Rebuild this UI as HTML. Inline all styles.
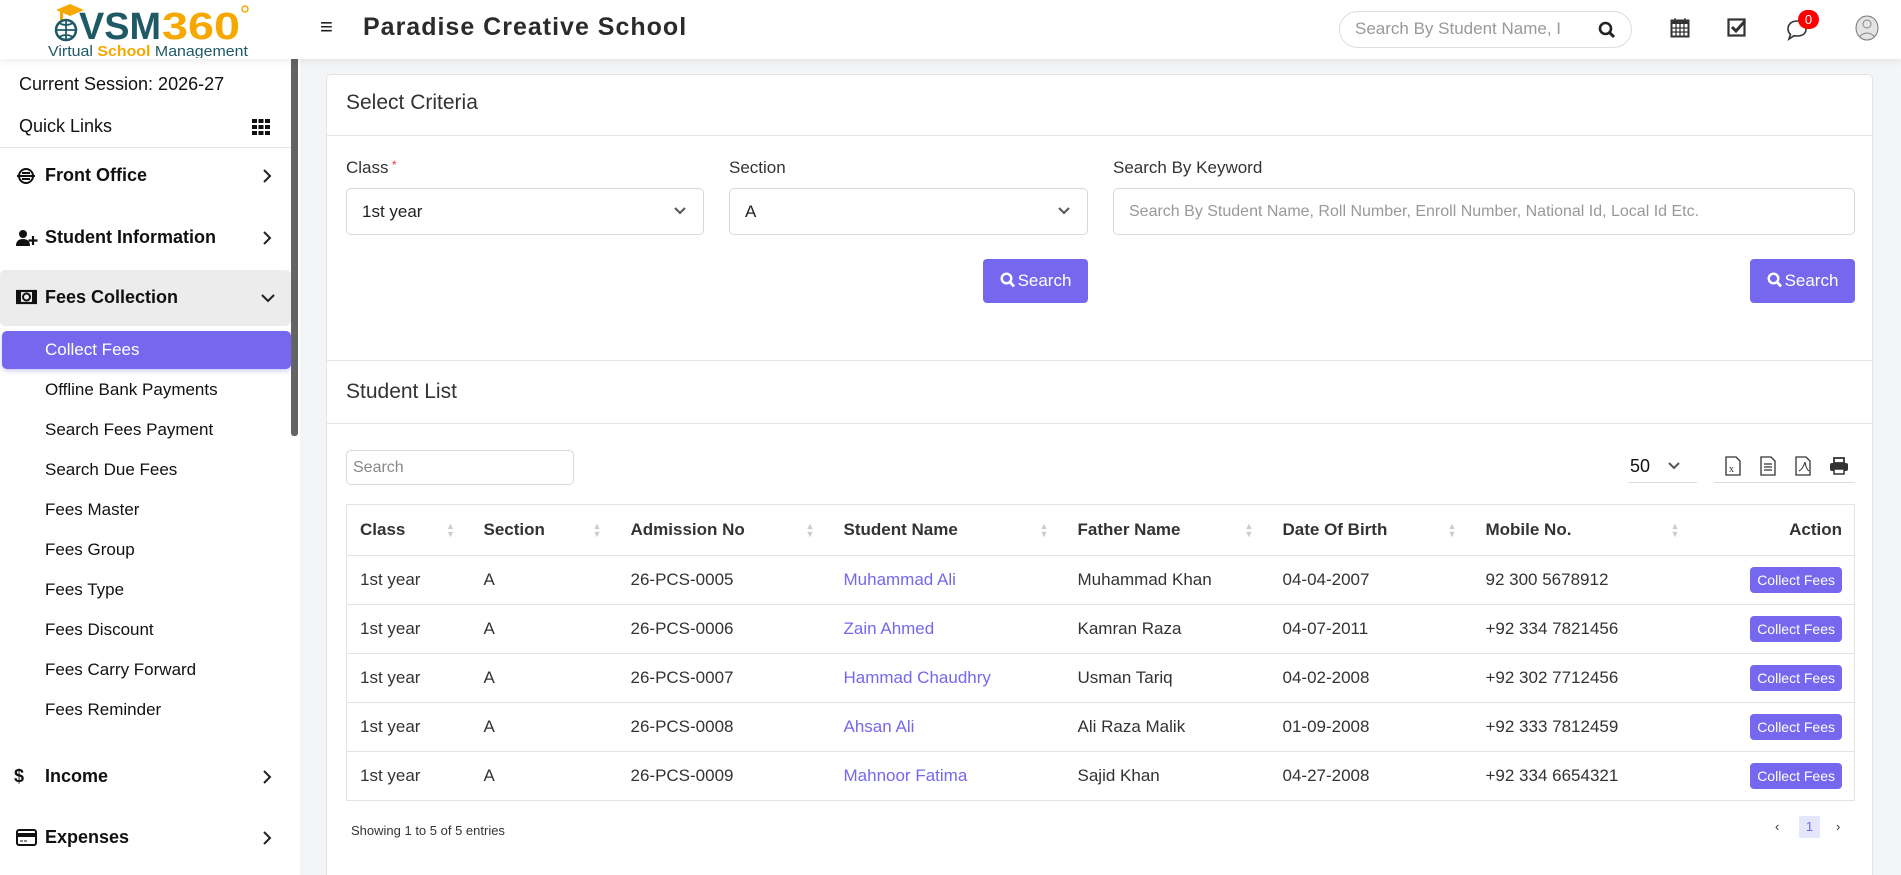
<!DOCTYPE html>
<html><head><meta charset="utf-8">
<style>
*{box-sizing:border-box;margin:0;padding:0}
html{width:1901px;height:875px;overflow:hidden}
body{width:1901px;height:875px;overflow:hidden;background:#f4f5f7;font-family:"Liberation Sans",sans-serif;color:#333;position:relative}
.a{position:absolute}
#hdr{left:0;top:0;width:1901px;height:59px;background:#fff;box-shadow:0 2px 8px rgba(0,0,0,.08);z-index:5}
#side{left:0;top:59px;width:300px;height:816px;background:#fff;z-index:3}
.mi{position:absolute;left:16px;font-weight:bold;font-size:18px;color:#111}
.mi svg{position:absolute;left:0;top:2px}
.mi span{position:absolute;left:29px;white-space:nowrap}
.chev{position:absolute;left:261px}
.sub{position:absolute;left:45px;font-size:17px;color:#111;white-space:nowrap}
#card{left:326px;top:74px;width:1547px;height:801px;background:#fff;border:1px solid #e3e3e3;border-bottom:none;border-radius:5px 5px 0 0}
.lbl{position:absolute;font-size:17px;color:#333}
.sel{position:absolute;height:47px;border:1px solid #d6d9e0;border-radius:5px;background:#fff;font-size:17px;color:#222;padding:13px 15px}
.btn{position:absolute;background:#7567ee;color:#fff;border-radius:4px;font-size:17px;padding:12px 0;text-align:center}
.btn svg{vertical-align:-2px;margin-right:3px}
table{position:absolute;left:346px;top:504px;width:1509px;border-collapse:collapse;font-size:17px}
td,th{height:49px;border-bottom:1px solid #e3e3e3;text-align:left;padding:0 0 0 13px;white-space:nowrap}
th{height:51px;font-weight:bold;color:#333;position:relative}
tbody td{color:#333}
.srt{position:absolute;top:17px;font-size:9px;color:#ccc;line-height:8px}
.lnk{color:#7567ee}
.cf{display:inline-block;background:#7567ee;color:#fff;font-size:14px;padding:5px 7px;border-radius:4px}
</style></head><body>
<div id="hdr" class="a">
  <svg class="a" style="left:44px;top:2px" width="210" height="56" viewBox="0 0 210 56">
    <path d="M12 8 L26 2 L40 8 L26 14 Z" fill="#f7a800"/><rect x="16" y="8" width="3" height="10" fill="#f7a800"/>
    <circle cx="22" cy="28" r="10" fill="none" stroke="#1f5966" stroke-width="2.5"/><path d="M12 28h20M22 18v20M15 21q7 4 14 0M15 35q7-4 14 0" stroke="#1f5966" stroke-width="1.8" fill="none"/>
    <text x="35" y="37" font-family="Liberation Sans" font-weight="bold" font-size="38" fill="#1f5966" textLength="82" lengthAdjust="spacingAndGlyphs">VSM</text>
    <text x="118" y="37" font-family="Liberation Sans" font-weight="bold" font-size="38" fill="#f7a800" textLength="78" lengthAdjust="spacingAndGlyphs">360</text>
    <circle cx="201" cy="7" r="3" fill="none" stroke="#f7a800" stroke-width="1.5"/>
    <text x="4" y="54" font-family="Liberation Sans" font-size="15" fill="#1f5966" textLength="200" lengthAdjust="spacingAndGlyphs">Virtual <tspan fill="#f7a800" font-weight="bold">School</tspan> Management</text>
  </svg>
  <div class="a" style="left:320px;top:14px;font-size:22px;font-weight:bold;color:#222">≡</div>
  <div class="a" style="left:363px;top:13px;font-size:25px;font-weight:bold;color:#2b2b2b;letter-spacing:1px">Paradise Creative School</div>
  <div class="a" style="left:1339px;top:11px;width:293px;height:37px;border:1px solid #ddd;border-radius:19px"></div>
  <div class="a" style="left:1355px;top:19px;font-size:17px;color:#999">Search By Student Name, I</div>
  <svg class="a" style="left:1598px;top:21px" width="18" height="18" viewBox="0 0 18 18"><circle cx="7.5" cy="7.5" r="5.5" fill="none" stroke="#222" stroke-width="2.6"/><path d="M11.5 11.5l4.5 4.5" stroke="#222" stroke-width="3"/></svg>
  <svg class="a" style="left:1670px;top:17px" width="20" height="21" viewBox="0 0 20 21"><rect x="1.5" y="3.5" width="17" height="16" fill="none" stroke="#333" stroke-width="2"/><rect x="1" y="3" width="18" height="4" fill="#333"/><path d="M5 1v4M15 1v4M1.5 11h17M1.5 15h17M6 7v12M10 7v12M14 7v12" stroke="#333" stroke-width="1.3"/></svg>
  <svg class="a" style="left:1727px;top:17px" width="22" height="21" viewBox="0 0 22 21"><rect x="1.5" y="2.5" width="16" height="16" fill="none" stroke="#333" stroke-width="2.2"/><path d="M5 10l4 4 9-10" fill="none" stroke="#333" stroke-width="3"/></svg>
  <svg class="a" style="left:1785px;top:18px" width="24" height="24" viewBox="0 0 24 24"><path d="M3 11c0-5 4-8 9-8s9 3 9 8-4 7-9 7c-1 0-2 0-3-.3L4 21l1.5-4.5C4 15 3 13 3 11z" fill="none" stroke="#333" stroke-width="1.6"/></svg>
  <div class="a" style="left:1798px;top:10px;width:21px;height:19px;background:#f00;border-radius:10px;color:#fff;font-size:13px;text-align:center;line-height:19px">0</div>
  <svg class="a" style="left:1855px;top:15px" width="24" height="26" viewBox="0 0 24 26"><ellipse cx="12" cy="13" rx="11" ry="12" fill="#e4e4e4" stroke="#777" stroke-width="1"/><circle cx="12" cy="9" r="4" fill="none" stroke="#888"/><path d="M4 22q8-8 16 0" fill="none" stroke="#888"/></svg>
</div>

<div id="side" class="a">
  <div class="a" style="left:291px;top:-17px;width:7px;height:394px;background:#646464;border-radius:3px"></div>
  <div class="a" style="left:19px;top:15px;font-size:18px;color:#111">Current Session: 2026-27</div>
  <div class="a" style="left:19px;top:57px;font-size:18px;color:#111">Quick Links</div>
  <svg class="a" style="left:252px;top:60px" width="18" height="16" viewBox="0 0 18 16"><g fill="#111"><rect x="0" y="0" width="5" height="4"/><rect x="6.5" y="0" width="5" height="4"/><rect x="13" y="0" width="5" height="4"/><rect x="0" y="6" width="5" height="4"/><rect x="6.5" y="6" width="5" height="4"/><rect x="13" y="6" width="5" height="4"/><rect x="0" y="12" width="5" height="4"/><rect x="6.5" y="12" width="5" height="4"/><rect x="13" y="12" width="5" height="4"/></g></svg>
  <div class="a" style="left:0;top:88px;width:291px;height:1px;background:#e5e5e5"></div>

  <div class="mi" style="top:106px"><svg width="20" height="18" viewBox="0 0 20 18"><circle cx="10" cy="9" r="7" fill="none" stroke="#111" stroke-width="2"/><path d="M1 9h18M6 6h8M6 12h8" stroke="#111" stroke-width="2"/></svg><span>Front Office</span></div>
  <svg class="chev" style="top:108px" width="12" height="18" viewBox="0 0 12 18"><path d="M3 3l6 6-6 6" fill="none" stroke="#222" stroke-width="2"/></svg>
  <div class="mi" style="top:168px"><svg width="22" height="18" viewBox="0 0 22 18"><circle cx="7" cy="5" r="4" fill="#111"/><path d="M0 17q0-7 7-7t7 7z" fill="#111"/><path d="M17 7v9M12.5 11.5h9" stroke="#111" stroke-width="2.2"/></svg><span>Student Information</span></div>
  <svg class="chev" style="top:170px" width="12" height="18" viewBox="0 0 12 18"><path d="M3 3l6 6-6 6" fill="none" stroke="#222" stroke-width="2"/></svg>
  <div class="a" style="left:0;top:211px;width:291px;height:56px;background:#ececec;border-radius:5px"></div>
  <div class="mi" style="top:228px"><svg width="21" height="16" viewBox="0 0 21 16"><rect x="1" y="2" width="19" height="12" fill="none" stroke="#111" stroke-width="2.2"/><circle cx="10.5" cy="8" r="3.5" fill="none" stroke="#111" stroke-width="2"/><rect x="1" y="2" width="4" height="12" fill="#111"/><rect x="16" y="2" width="4" height="12" fill="#111"/></svg><span>Fees Collection</span></div>
  <svg class="a" style="left:260px;top:233px" width="16" height="12" viewBox="0 0 16 12"><path d="M2 3l6 6 6-6" fill="none" stroke="#222" stroke-width="2"/></svg>
  <div class="a" style="left:2px;top:272px;width:289px;height:38px;background:#7567ee;border-radius:5px;box-shadow:0 2px 5px rgba(117,103,238,.35)"></div>
  <div class="sub" style="top:281px;color:#fff">Collect Fees</div>
  <div class="sub" style="top:321px">Offline Bank Payments</div>
  <div class="sub" style="top:361px">Search Fees Payment</div>
  <div class="sub" style="top:401px">Search Due Fees</div>
  <div class="sub" style="top:441px">Fees Master</div>
  <div class="sub" style="top:481px">Fees Group</div>
  <div class="sub" style="top:521px">Fees Type</div>
  <div class="sub" style="top:561px">Fees Discount</div>
  <div class="sub" style="top:601px">Fees Carry Forward</div>
  <div class="sub" style="top:641px">Fees Reminder</div>
  <div class="mi" style="top:707px"><span style="left:-2px">$</span><span>Income</span></div>
  <svg class="chev" style="top:709px" width="12" height="18" viewBox="0 0 12 18"><path d="M3 3l6 6-6 6" fill="none" stroke="#222" stroke-width="2"/></svg>
  <div class="mi" style="top:768px"><svg width="21" height="17" viewBox="0 0 21 17"><rect x="1" y="1" width="19" height="15" rx="2" fill="none" stroke="#111" stroke-width="2"/><rect x="1" y="4" width="19" height="4" fill="#111"/><path d="M4 12h3M8 12h3" stroke="#111"/></svg><span>Expenses</span></div>
  <svg class="chev" style="top:770px" width="12" height="18" viewBox="0 0 12 18"><path d="M3 3l6 6-6 6" fill="none" stroke="#222" stroke-width="2"/></svg>
</div>

<div id="card" class="a"></div>
<div class="a" style="left:346px;top:91px;font-size:21px;color:#333">Select Criteria</div>
<div class="a" style="left:327px;top:135px;width:1545px;height:1px;background:#e5e5e5"></div>
<div class="lbl" style="left:346px;top:158px">Class<span style="color:#e33;font-size:12px;vertical-align:top"> *</span></div>
<div class="lbl" style="left:729px;top:158px">Section</div>
<div class="lbl" style="left:1113px;top:158px">Search By Keyword</div>
<div class="sel" style="left:346px;top:188px;width:358px">1st year</div>
<div class="sel" style="left:729px;top:188px;width:359px">A</div>
<svg class="a" style="left:673px;top:206px" width="14" height="10" viewBox="0 0 14 10"><path d="M2 2l5 5 5-5" fill="none" stroke="#555" stroke-width="2"/></svg>
<svg class="a" style="left:1057px;top:206px" width="14" height="10" viewBox="0 0 14 10"><path d="M2 2l5 5 5-5" fill="none" stroke="#555" stroke-width="2"/></svg>
<div class="sel" style="left:1113px;top:188px;width:742px;color:#999;font-size:16px;padding-top:14px">Search By Student Name, Roll Number, Enroll Number, National Id, Local Id Etc.</div>
<div class="btn" style="left:983px;top:259px;width:105px;height:44px"><svg width="15" height="16" viewBox="0 0 15 16"><circle cx="6.5" cy="6.5" r="4.8" fill="none" stroke="#fff" stroke-width="2.4"/><path d="M10 10l4 4.5" stroke="#fff" stroke-width="2.8"/></svg>Search</div>
<div class="btn" style="left:1750px;top:259px;width:105px;height:44px"><svg width="15" height="16" viewBox="0 0 15 16"><circle cx="6.5" cy="6.5" r="4.8" fill="none" stroke="#fff" stroke-width="2.4"/><path d="M10 10l4 4.5" stroke="#fff" stroke-width="2.8"/></svg>Search</div>
<div class="a" style="left:327px;top:360px;width:1545px;height:1px;background:#e5e5e5"></div>
<div class="a" style="left:346px;top:380px;font-size:21px;color:#333">Student List</div>
<div class="a" style="left:327px;top:423px;width:1545px;height:1px;background:#e5e5e5"></div>
<div class="a" style="left:346px;top:450px;width:228px;height:35px;border:1px solid #d6d9e0;border-radius:5px;padding:8px 6px;font-size:16px;color:#888">Search</div>
<div class="a" style="left:1630px;top:456px;font-size:18px;color:#111">50</div>
<svg class="a" style="left:1667px;top:461px" width="14" height="10" viewBox="0 0 14 10"><path d="M2 2l5 5 5-5" fill="none" stroke="#555" stroke-width="2"/></svg>
<div class="a" style="left:1628px;top:482px;width:69px;height:1px;background:#ddd"></div>
<div class="a" style="left:1714px;top:482px;width:141px;height:1px;background:#ddd"></div>
<svg class="a" style="left:1724px;top:456px" width="130" height="20" viewBox="0 0 130 20">
 <g fill="none" stroke="#333" stroke-width="1.3"><path d="M2 1h10l4 4v14H2z"/><path d="M37 1h10l4 4v14H37z"/><path d="M72 1h10l4 4v14H72z"/></g>
 <text x="5" y="16" font-size="10" font-family="Liberation Serif" fill="#333">x</text>
 <path d="M40 8h8M40 11h8M40 14h8" stroke="#333" stroke-width="1.3"/>
 <path d="M75 15q4-2 6-9q1 7 4 9" fill="none" stroke="#333" stroke-width="1"/>
 <rect x="110" y="2" width="10" height="5" fill="none" stroke="#333" stroke-width="1.8"/><rect x="106" y="7" width="18" height="8" rx="2" fill="#333"/><rect x="110" y="13" width="10" height="5" fill="#fff" stroke="#333" stroke-width="1.5"/>
</svg>
<table>
<thead><tr style="border-top:1px solid #e3e3e3">
<th style="width:124px;border-left:1px solid #e3e3e3">Class<span class="srt" style="left:99px">▲<br>▼</span></th>
<th style="width:147px">Section<span class="srt" style="left:122px">▲<br>▼</span></th>
<th style="width:213px">Admission No<span class="srt" style="left:188px">▲<br>▼</span></th>
<th style="width:234px">Student Name<span class="srt" style="left:209px">▲<br>▼</span></th>
<th style="width:205px">Father Name<span class="srt" style="left:180px">▲<br>▼</span></th>
<th style="width:203px">Date Of Birth<span class="srt" style="left:178px">▲<br>▼</span></th>
<th style="width:223px">Mobile No.<span class="srt" style="left:198px">▲<br>▼</span></th>
<th style="text-align:right;padding-right:12px;border-right:1px solid #e3e3e3">Action</th>
</tr></thead>
<tbody>
<tr><td style="border-left:1px solid #e3e3e3">1st year</td><td>A</td><td>26-PCS-0005</td><td class="lnk">Muhammad Ali</td><td>Muhammad Khan</td><td>04-04-2007</td><td>92 300 5678912</td><td style="text-align:right;padding-right:12px;border-right:1px solid #e3e3e3"><span class="cf">Collect Fees</span></td></tr>
<tr><td style="border-left:1px solid #e3e3e3">1st year</td><td>A</td><td>26-PCS-0006</td><td class="lnk">Zain Ahmed</td><td>Kamran Raza</td><td>04-07-2011</td><td>+92 334 7821456</td><td style="text-align:right;padding-right:12px;border-right:1px solid #e3e3e3"><span class="cf">Collect Fees</span></td></tr>
<tr><td style="border-left:1px solid #e3e3e3">1st year</td><td>A</td><td>26-PCS-0007</td><td class="lnk">Hammad Chaudhry</td><td>Usman Tariq</td><td>04-02-2008</td><td>+92 302 7712456</td><td style="text-align:right;padding-right:12px;border-right:1px solid #e3e3e3"><span class="cf">Collect Fees</span></td></tr>
<tr><td style="border-left:1px solid #e3e3e3">1st year</td><td>A</td><td>26-PCS-0008</td><td class="lnk">Ahsan Ali</td><td>Ali Raza Malik</td><td>01-09-2008</td><td>+92 333 7812459</td><td style="text-align:right;padding-right:12px;border-right:1px solid #e3e3e3"><span class="cf">Collect Fees</span></td></tr>
<tr><td style="border-left:1px solid #e3e3e3">1st year</td><td>A</td><td>26-PCS-0009</td><td class="lnk">Mahnoor Fatima</td><td>Sajid Khan</td><td>04-27-2008</td><td>+92 334 6654321</td><td style="text-align:right;padding-right:12px;border-right:1px solid #e3e3e3"><span class="cf">Collect Fees</span></td></tr>
</tbody></table>
<div class="a" style="left:351px;top:823px;font-size:13px;color:#333">Showing 1 to 5 of 5 entries</div>
<div class="a" style="left:1775px;top:819px;font-size:13px;color:#333">‹</div>
<div class="a" style="left:1799px;top:816px;width:21px;height:22px;background:#e6e6fb;border-radius:2px;font-size:13px;color:#7567ee;text-align:center;line-height:22px">1</div>
<div class="a" style="left:1836px;top:819px;font-size:13px;color:#333">›</div>
</body></html>
